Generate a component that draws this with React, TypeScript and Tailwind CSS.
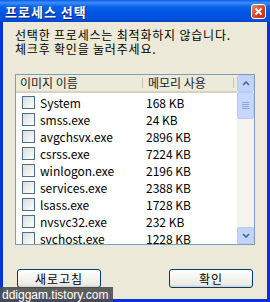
import React from "react";

const rows: [string, string][] = [
  ["System", "168 KB"],
  ["smss.exe", "24 KB"],
  ["avgchsvx.exe", "2896 KB"],
  ["csrss.exe", "7224 KB"],
  ["winlogon.exe", "2196 KB"],
  ["services.exe", "2388 KB"],
  ["lsass.exe", "1728 KB"],
  ["nvsvc32.exe", "232 KB"],
  ["svchost.exe", "1228 KB"],
];

const font = { fontFamily: '"Noto Sans CJK KR", "Liberation Sans", sans-serif' };

export default function App() {
  return (
    <div className="w-[270px] h-[302px] relative overflow-hidden bg-[#0831d9]" style={font}>
      <div className="flex flex-col h-full">
        {/* title bar */}
        <div className="h-[22px] shrink-0 flex items-center justify-between pl-[5px] pr-[4px] bg-[linear-gradient(to_bottom,#0a5ce6_0%,#3d8dfb_12%,#0b63e8_30%,#0054e3_60%,#0050dc_90%,#0242c2_100%)]">
          <span className="text-white font-bold text-[13px] leading-none tracking-[1px] [text-shadow:1px_1px_0_#0a1f6e]">프로세스 선택</span>
          <div className="w-[15px] h-[15px] rounded-[3px] border border-white bg-[linear-gradient(135deg,#e88a6a,#d6401c_60%,#c03010)] flex items-center justify-center">
            <svg width="9" height="9" viewBox="0 0 9 9">
              <path d="M1.5 1.5 L7.5 7.5 M7.5 1.5 L1.5 7.5" stroke="white" strokeWidth="1.8" />
            </svg>
          </div>
        </div>
        {/* body */}
        <div className="flex-1 mx-[3px] mb-[3px] bg-[#ece9d8] flex flex-col pt-[6px] px-[12px]">
          <div className="text-[12px] leading-[14px] text-black tracking-[0.8px] flex flex-col">
            <div className="h-[14px]">선택한 프로세스는 최적화하지 않습니다.</div>
            <div className="h-[14px]">체크후 확인을 눌러주세요.</div>
          </div>
          <div className="mt-[18px] h-[171px] border border-[#7f9db9] bg-white flex">
            <div className="flex-1 flex flex-col overflow-hidden">
              <div className="h-[18px] shrink-0 flex bg-[#ebeadb] border-b-[2px] border-[#d6d3c0] text-[12px] text-[#222]">
                <div className="w-[126px] pl-[4px] flex items-center">이미지 이름</div>
                <div className="w-[1px] my-[3px] bg-[#c7c5b2]" />
                <div className="flex-1 pl-[5px] flex items-center">메모리 사용</div>
                <div className="w-[1px] my-[3px] bg-[#c7c5b2] mr-[3px]" />
              </div>
              <div className="flex flex-col pt-[1px]">
                {rows.map(([n, m]) => (
                  <div key={n} className="h-[17px] shrink-0 flex items-center text-[12px] text-black">
                    <div className="w-[126px] flex items-center pl-[6px]">
                      <div className="w-[13px] h-[13px] border border-[#4f6d8f] bg-[linear-gradient(135deg,#dcdcd7,#fff)] mr-[5px]" />
                      <span>{n}</span>
                    </div>
                    <div className="pl-[4px]">{m}</div>
                  </div>
                ))}
              </div>
            </div>
            {/* scrollbar */}
            <div className="w-[17px] shrink-0 bg-[#f4f3ee] flex flex-col">
              <div className="h-[17px] rounded-[2px] border border-[#b8cdf5] bg-[#c2d4fc] flex items-center justify-center">
                <svg width="8" height="5" viewBox="0 0 8 5"><path d="M1 4 L4 1 L7 4" stroke="#4d6185" strokeWidth="1.6" fill="none" /></svg>
              </div>
              <div className="h-[27px] rounded-[2px] border border-[#b8cdf5] bg-[#c8d6fb] flex flex-col items-center justify-center gap-[1px]">
                <div className="w-[7px] h-[1px] bg-[#8aa6e6]" />
                <div className="w-[7px] h-[1px] bg-[#8aa6e6]" />
                <div className="w-[7px] h-[1px] bg-[#8aa6e6]" />
                <div className="w-[7px] h-[1px] bg-[#8aa6e6]" />
              </div>
              <div className="flex-1" />
              <div className="h-[17px] rounded-[2px] border border-[#b8cdf5] bg-[#c2d4fc] flex items-center justify-center">
                <svg width="8" height="5" viewBox="0 0 8 5"><path d="M1 1 L4 4 L7 1" stroke="#4d6185" strokeWidth="1.6" fill="none" /></svg>
              </div>
            </div>
          </div>
          <div className="flex justify-between mt-[24px] px-[2px]">
            <button className="w-[84px] h-[19px] rounded-[3px] border border-[#003c74] bg-[linear-gradient(to_bottom,#fff,#ecebe6_85%,#d6d0c5)] text-[12px] text-black leading-none tracking-[1px]">새로고침</button>
            <button className="w-[84px] h-[19px] rounded-[3px] border border-[#003c74] bg-[linear-gradient(to_bottom,#fff,#ecebe6_85%,#d6d0c5)] text-[12px] text-black leading-none tracking-[1px]">확인</button>
          </div>
        </div>
      </div>
      <div className="absolute left-0 bottom-0 h-[15px] w-[113px] bg-[#4e4e4e]/90 flex items-center pl-[2px]">
        <span className="text-white text-[12px] leading-none" style={{ fontFamily: '"Liberation Sans", sans-serif' }}>ddiggam.tistory.com</span>
      </div>
    </div>
  );
}
